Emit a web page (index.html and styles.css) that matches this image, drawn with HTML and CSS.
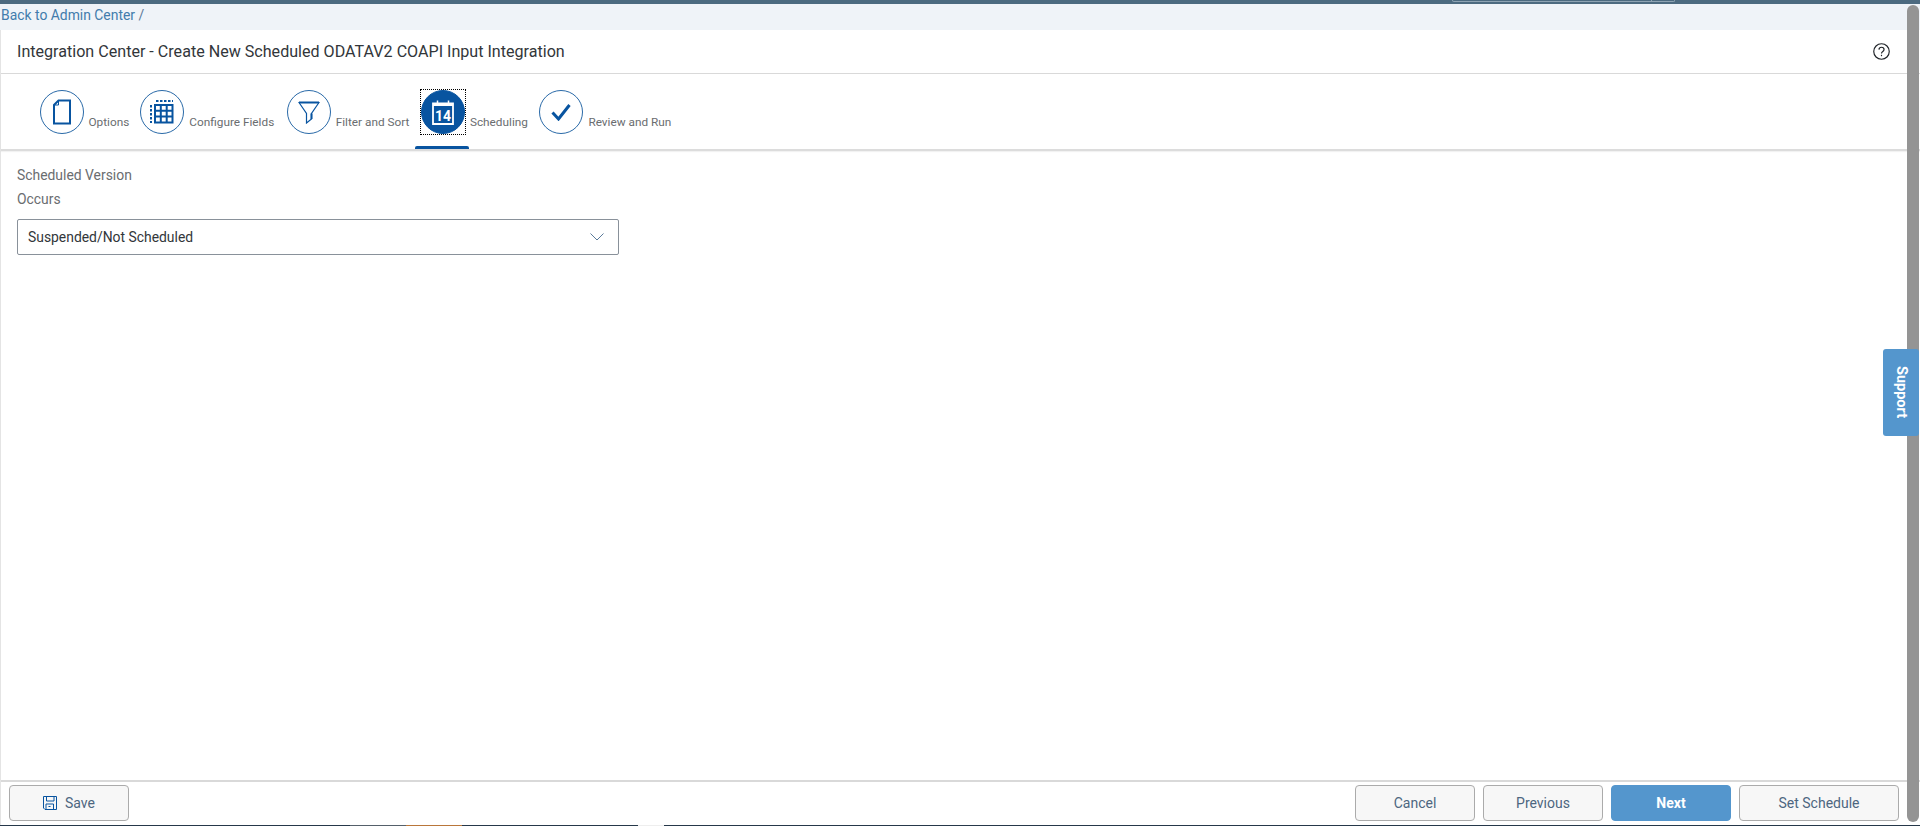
FILE: index.html
```html
<!DOCTYPE html>
<html lang="en">
<head>
<meta charset="utf-8">
<title>Integration Center</title>
<link rel="stylesheet" href="styles.css">
</head>
<body>
<div class="topbar">
  <div class="topbar-outline"><span class="topbar-cell"></span></div>
</div>
<nav class="crumbs"><a class="crumb-link">Back to Admin Center</a> /</nav>
<main class="panel">
  <header class="title-row">
    <h1 class="title">Integration Center - Create New Scheduled ODATAV2 COAPI Input Integration</h1>
    <svg class="help" viewBox="0 0 16 16"><circle cx="8" cy="8" r="7.3"/><path d="M5.6 6.2C5.7 4.8 6.7 4 8 4c1.400 0 2.400.9 2.400 2.100 0 1.100-.7 1.600-1.400 2.100-.7.500-1 .9-1 1.700"/><path d="M8 11.100v1.300"/></svg>
  </header>
  <div class="steps">
    <div class="step step-options">
      <span class="step-circle"><svg class="ico ico-doc" viewBox="0 0 18 26"><path class="thick" d="M5.500 1.500H17v23H1V6z"/><path class="thin" d="M5.500 1.500V6H1"/></svg></span>
      <span class="step-label">Options</span>
    </div>
    <div class="step step-fields">
      <span class="step-circle"><svg class="ico ico-grid" viewBox="0 0 24 24"><path class="grid" d="M5 5h17.500v17.500H5zM5 10.800h17.500M5 16.600h17.500M10.800 5v17.500M16.700 5v17.500"/><path class="dash" d="M1 5v18M6 1h17"/></svg></span>
      <span class="step-label">Configure Fields</span>
    </div>
    <div class="step step-filter">
      <span class="step-circle"><svg class="ico ico-filter" viewBox="0 0 22 23"><path class="thin-dark" d="M1 1.500h20l-7.500 11V18L8.500 22V12.500z"/><path class="thick" d="M1 1.500h20M13.500 12.500V18"/></svg></span>
      <span class="step-label">Filter and Sort</span>
    </div>
    <div class="step step-sched">
      <span class="step-wrap"><span class="step-circle active">
        <svg class="ico ico-cal" viewBox="0 0 22 25"><path class="cal-frame" d="M1 3.500h20v20.500H1z"/><path class="cal-band" d="M1 3.500h20V6H1z"/><path class="cal-tab" d="M5.500 .5v2.500M16.500 .5v2.500"/><text class="cal-num" x="11" y="20.500">14</text></svg>
      </span></span>
      <span class="step-label">Scheduling</span>
    </div>
    <div class="step step-review">
      <span class="step-circle"><svg class="ico ico-check" viewBox="0 0 20 18"><path d="M1.500 9.500l6 6.500L18.500 2"/></svg></span>
      <span class="step-label">Review and Run</span>
    </div>
  </div>
  <section class="content">
    <div class="field-label first">Scheduled Version</div>
    <div class="field-label">Occurs</div>
    <div class="select">
      <span>Suspended/Not Scheduled</span>
      <svg class="chev" viewBox="0 0 14 8"><path d="M.5.500 7 7 13.500.500"/></svg>
    </div>
  </section>
  <footer class="footer">
    <button class="btn btn-save"><svg class="save-ico" viewBox="0 0 14 14"><path d="M3 .5h10.500v13H2L.5 12V.5zM3.500.5v4.500h7.500V.5M3 13.500V8h7.500v5.500M5.500 10.500h2"/></svg>Save</button>
    <div class="footer-right">
      <button class="btn btn-nav">Cancel</button>
      <button class="btn btn-nav">Previous</button>
      <button class="btn btn-nav btn-primary">Next</button>
      <button class="btn btn-wide">Set Schedule</button>
    </div>
  </footer>
</main>
<div class="taskbar"><span class="seg-grey"></span><span class="seg-orange"></span><span class="seg-white"></span></div>
<div class="scrollbar"></div>
<div class="support"><span class="support-text">Support</span></div>
</body>
</html>
```
FILE: styles.css
```css
* { box-sizing: border-box; }
html, body { margin: 0; height: 100%; }
body {
  display: flex;
  flex-direction: column;
  height: 826px;
  overflow: hidden;
  background: #fff;
  font-family: Roboto, "Noto Sans", sans-serif;
  color: #32363a;
  position: relative;
}
.topbar { height: 4px; background: #4c6a80; flex: none; padding-left: 1452px; }
.topbar-outline {
  width: 223px; height: 2px;
  border: 1px solid #8ea3b3; border-top: 0;
  border-radius: 0 0 2px 2px;
  display: flex; justify-content: flex-end;
}
.topbar-cell { width: 23px; border-left: 1px solid #8ea3b3; }
.crumbs {
  height: 26px; flex: none;
  background: #eff3f8;
  padding-left: 1px;
  font-size: 13.900px;
  line-height: 22px;
  color: #5b7a98;
}
.crumb-link { color: #427cac; }
.panel {
  flex: 1;
  min-height: 0;
  display: flex;
  flex-direction: column;
  border-left: 1px solid #e4e4e4;
}
.title-row {
  height: 44px; flex: none;
  display: flex; align-items: center; justify-content: space-between;
  padding: 0 30px 0 16px;
  border-bottom: 1px solid #d9d9d9;
}
.title { margin: 0; font-size: 16.100px; font-weight: 400; color: #32363a; }
.help { width: 17px; height: 17px; fill: none; stroke: #1f2328; stroke-width: 1.100; }
.steps {
  height: 77px; flex: none;
  display: flex;
  padding: 16px 0 0 38.500px;
  border-bottom: 2px solid #dcdcdc;
  box-shadow: 0 1px 1px rgba(0,0,0,.05);
}
.step { display: flex; height: 61px; position: relative; }
.step-circle {
  width: 44px; height: 44px; border-radius: 50%;
  border: 1.500px solid #2a6aa8;
  display: flex; align-items: center; justify-content: center;
  flex: none; background: #fff;
}
.step-circle.active { background: #0854a0; border-color: #0854a0; }
.step-wrap { display: block; height: 44px; outline: 1px dotted #000; }
.step-label {
  font-size: 11.800px; color: #6a6d70;
  line-height: 16px; margin: 24px 0 0 5px;
  white-space: nowrap;
}
.step-fields { margin-left: 11px; }
.step-filter { margin-left: 12.500px; }
.step-sched { margin-left: 11.500px; }
.step-sched::after {
  content: ""; position: absolute;
  left: -6px; width: 54px; bottom: 2px; height: 3px;
  background: #0854a0; border-radius: 2px 2px 0 0;
}
.step-review { margin-left: 11.500px; }
.ico { fill: none; flex: none; }
.ico-doc { width: 18px; height: 26px; }
.ico-grid { width: 24px; height: 24px; }
.ico-filter { width: 22px; height: 23px; }
.ico-cal { width: 22px; height: 25px; }
.ico-check { width: 20px; height: 18px; }
.thick { fill: none; stroke: #0854a0; stroke-width: 2; }
.thin { fill: none; stroke: #0854a0; stroke-width: 1; }
.thin-dark { fill: none; stroke: #0854a0; stroke-width: 1.200; }
.grid { fill: none; stroke: #0854a0; stroke-width: 2; }
.dash { fill: none; stroke: #0854a0; stroke-width: 2; stroke-dasharray: 2.500 1.500; }
.cal-frame { fill: none; stroke: #fff; stroke-width: 1.800; }
.cal-band { fill: #fff; }
.cal-tab { fill: none; stroke: #fff; stroke-width: 1.500; }
.cal-num { fill: #fff; font-size: 14px; font-weight: 700; text-anchor: middle; font-family: Roboto, sans-serif; }
.ico-check path { fill: none; stroke: #0854a0; stroke-width: 3; }
.content { flex: 1; min-height: 0; padding: 14px 0 0 16px; }
.field-label { font-size: 13.900px; line-height: 20px; color: #6a6d70; }
.field-label + .field-label { margin-top: 4px; }
.select {
  width: 602px; height: 36px;
  margin-top: 10px;
  border: 1px solid #89919a;
  border-radius: 2px;
  display: flex; align-items: center; justify-content: space-between;
  padding: 0 14px 0 10px;
  font-size: 13.900px; color: #32363a;
}
.chev { width: 14px; height: 8px; fill: none; stroke: #5a7a9a; stroke-width: 1; }
.footer {
  height: 45px; flex: none;
  border-top: 2px solid #d9d9d9;
  display: flex; justify-content: space-between;
  padding: 3px 21px 0 8px;
}
.footer-right { display: flex; gap: 8px; }
.btn {
  height: 36px;
  background: #f7f7f7;
  border: 1px solid #ababab;
  border-radius: 4px;
  font: inherit; font-size: 14px; color: #4d6680;
  display: flex; align-items: center; justify-content: center;
  padding: 0;
}
.btn-save { width: 120px; gap: 8px; }
.save-ico { width: 14px; height: 14px; fill: none; stroke: #0854a0; stroke-width: 1; }
.btn-nav { width: 120px; }
.btn-wide { width: 160px; }
.btn-primary { background: #5496cd; border-color: #5496cd; color: #fff; font-weight: 700; }
.taskbar {
  height: 1px; flex: none;
  background: #26384a;
  display: flex; padding-left: 350px;
}
.seg-grey { width: 56px; background: #55606a; }
.seg-orange { width: 56px; background: #b9763a; }
.seg-white { width: 26px; margin-left: 176px; background: #eee; }
.scrollbar {
  position: absolute; left: 1907px; top: 5px;
  width: 12px; height: 817px;
  background: #949494;
  border-radius: 6px;
}
.support {
  position: absolute; left: 1883px; top: 349px;
  width: 36px; height: 87px;
  background: #5496cd;
  border-radius: 3px;
  display: flex; align-items: center; justify-content: center;
}
.support-text {
  writing-mode: vertical-rl;
  color: #fff; font-size: 14.500px; font-weight: 700;
}
```
